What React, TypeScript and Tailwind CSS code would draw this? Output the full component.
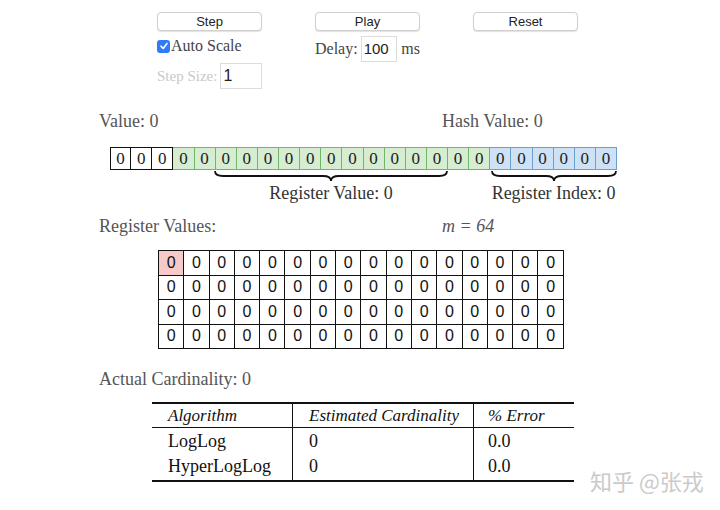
import React from "react";

const serif = { fontFamily: '"Liberation Serif", "Times New Roman", serif' };
const sans = { fontFamily: '"Liberation Sans", Arial, sans-serif' };

function Brace({ w }: { w: number }) {
  const m = w / 2;
  return (
    <svg width={w} height={12} viewBox={`0 0 ${w} 12`} className="block">
      <path
        d={`M1,1 Q1,6 9,6 L${m - 8},6 Q${m},6 ${m},11 Q${m},6 ${m + 8},6 L${w - 9},6 Q${w - 1},6 ${w - 1},1`}
        fill="none"
        stroke="#111"
        strokeWidth={1.8}
      />
    </svg>
  );
}

function Button({ label }: { label: string }) {
  return (
    <button
      className="w-[105px] h-[19px] rounded-[4px] border border-[#cfcfcf] bg-white text-[13px] leading-[17px] text-[#222] shadow-[0_1px_1px_rgba(0,0,0,0.12)]"
      style={sans}
    >
      {label}
    </button>
  );
}

export default function App() {
  const bits = Array.from({ length: 24 }, (_, i) => i);
  const rows = [0, 1, 2, 3];
  const cols = Array.from({ length: 16 }, (_, i) => i);
  return (
    <div className="relative w-[720px] h-[510px] bg-white overflow-hidden" style={serif}>
      {/* Controls */}
      <div className="flex gap-[53px] pl-[157px] pt-[12px]">
        <div className="flex flex-col w-[105px]">
          <Button label="Step" />
          <label className="flex items-center mt-[7px] h-[16px] text-[15px] text-[#444] whitespace-nowrap">
            <span className="shrink-0 w-[13px] h-[13px] rounded-[3px] bg-[#2f7cf6] flex items-center justify-center">
              <svg width="10" height="10" viewBox="0 0 10 10">
                <path d="M2,5.2 L4.2,7.5 L8,2.5" fill="none" stroke="white" strokeWidth="1.6" strokeLinecap="round" strokeLinejoin="round" />
              </svg>
            </span>
            <span className="ml-[1px] text-[16px]">Auto Scale</span>
          </label>
          <div className="flex items-center mt-[9px] text-[15px] text-[#c8c8c8] whitespace-nowrap">
            <span>Step Size:</span>
            <div className="ml-[3px] w-[43px] h-[26px] border border-[#dcdcdc] text-[#222] text-[16px] pl-[2px] leading-[24px]" style={sans}>
              1
            </div>
          </div>
        </div>
        <div className="flex flex-col w-[105px]">
          <Button label="Play" />
          <div className="flex items-center mt-[5px] text-[16px] text-[#444] whitespace-nowrap">
            <span>Delay:</span>
            <div className="ml-[3px] w-[43px] h-[26px] border border-[#dcdcdc] text-[#222] text-[15px] pl-[2px] leading-[24px]" style={sans}>
              100
            </div>
            <span className="ml-[4px]">ms</span>
          </div>
        </div>
        <div className="flex flex-col w-[105px]">
          <Button label="Reset" />
        </div>
      </div>

      {/* Value row */}
      <div className="flex pl-[99px] mt-[22px] text-[18px] text-[#555] leading-[20px]">
        <span className="w-[343px]">Value: 0</span>
        <span>Hash Value: 0</span>
      </div>

      {/* Bits */}
      <div className="pl-[110px] mt-[16px]">
        <div className="flex h-[23px]">
          {bits.map((i) => {
            const white = i < 3;
            const green = i >= 3 && i < 18;
            const cls = white
              ? "bg-white border-[#111]"
              : green
              ? "bg-[#d6edd2] border-[#6fb56a]"
              : "bg-[#cfe2f5] border-[#6b9fcf]";
            return (
              <div
                key={i}
                className={`w-[21.125px] h-[23px] border-y border-r ${i === 0 ? "border-l" : ""} ${cls} flex items-center justify-center text-[17px] text-[#222]`}
              >
                0
              </div>
            );
          })}
        </div>
        <div className="flex">
          <div className="w-[104px]" />
          <div className="flex flex-col items-center w-[234px]">
            <Brace w={234} />
            <span className="text-[18px] text-[#333] leading-[20px] mt-[1px] whitespace-nowrap">Register Value: 0</span>
          </div>
          <div className="w-[42.25px]" />
          <div className="flex flex-col items-center w-[126.75px]">
            <Brace w={126} />
            <span className="text-[18px] text-[#333] leading-[20px] mt-[1px] whitespace-nowrap">Register Index: 0</span>
          </div>
        </div>
      </div>

      {/* Register values */}
      <div className="flex pl-[99px] mt-[13px] text-[18px] text-[#555] leading-[20px]">
        <span className="w-[343px]">Register Values:</span>
        <span className="italic">m = 64</span>
      </div>

      <div className="pl-[158px] mt-[14px]">
        <table className="border-collapse" style={sans}>
          <tbody>
            {rows.map((r) => (
              <tr key={r}>
                {cols.map((c) => (
                  <td
                    key={c}
                    className={`w-[25.3px] h-[24.5px] p-0 border border-[#111] text-center text-[16px] leading-[20px] text-[#111] ${
                      r === 0 && c === 0 ? "bg-[#f7c9c9]" : "bg-white"
                    }`}
                  >
                    0
                  </td>
                ))}
              </tr>
            ))}
          </tbody>
        </table>
      </div>

      {/* Actual cardinality */}
      <div className="pl-[99px] mt-[20px] text-[18px] text-[#555] leading-[20px]">Actual Cardinality: 0</div>

      <div className="pl-[152px] mt-[13px]">
        <div className="w-[422px] border-t-2 border-b-2 border-[#111] text-[18px] text-[#111]">
          <div className="flex border-b border-[#111] h-[24px] items-center italic text-[17px]">
            <div className="w-[141px] pl-[16px] h-full flex items-center border-r border-[#111]">Algorithm</div>
            <div className="w-[181px] pl-[16px] h-full flex items-center border-r border-[#111] whitespace-nowrap">Estimated Cardinality</div>
            <div className="flex-1 pl-[14px]">% Error</div>
          </div>
          <div className="flex">
            <div className="w-[141px] pl-[16px] border-r border-[#111] pt-[1px] pb-[1px] leading-[25px]">
              <div>LogLog</div>
              <div>HyperLogLog</div>
            </div>
            <div className="w-[181px] pl-[16px] border-r border-[#111] pt-[1px] pb-[1px] leading-[25px]">
              <div>0</div>
              <div>0</div>
            </div>
            <div className="flex-1 pl-[14px] pt-[1px] pb-[1px] leading-[25px]">
              <div>0.0</div>
              <div>0.0</div>
            </div>
          </div>
        </div>
      </div>

      <div
        className="absolute left-[590px] top-[464px] text-[22px] text-[#cacaca]"
        style={{ fontFamily: '"Noto Sans CJK SC", "Liberation Sans", sans-serif' }}
      >
        知乎 @张戎
      </div>
    </div>
  );
}
